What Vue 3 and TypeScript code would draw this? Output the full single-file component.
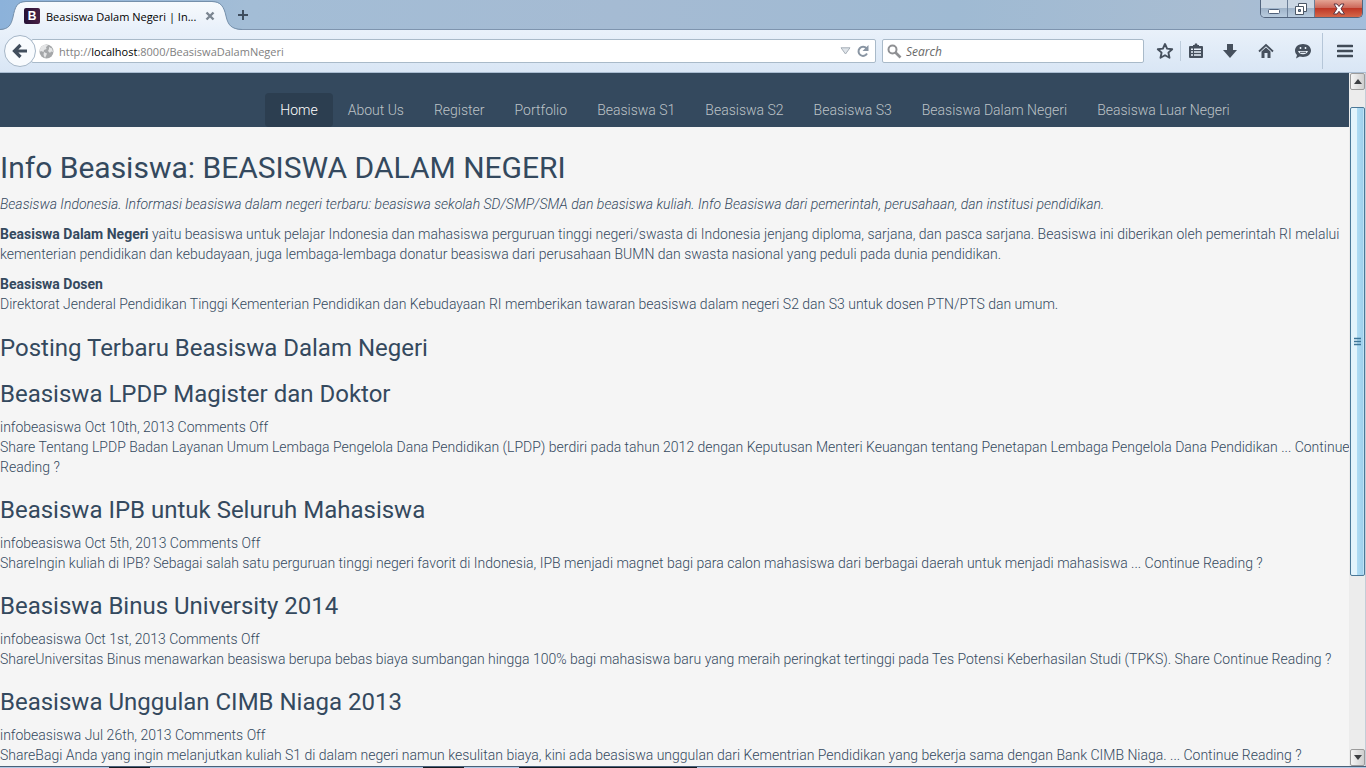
<script setup lang="ts">
import { ref } from 'vue'

interface Post {
  title: string
  meta: string
  text: string
}

const address = 'http://localhost:8000/BeasiswaDalamNegeri'
const query = ref('')

const links: string[] = [
  'Home',
  'About Us',
  'Register',
  'Portfolio',
  'Beasiswa S1',
  'Beasiswa S2',
  'Beasiswa S3',
  'Beasiswa Dalam Negeri',
  'Beasiswa Luar Negeri',
]

const posts: Post[] = [
  {
    title: 'Beasiswa LPDP Magister dan Doktor',
    meta: 'infobeasiswa Oct 10th, 2013 Comments Off',
    text: 'Share Tentang LPDP Badan Layanan Umum Lembaga Pengelola Dana Pendidikan (LPDP) berdiri pada tahun 2012 dengan Keputusan Menteri Keuangan tentang Penetapan Lembaga Pengelola Dana Pendidikan ... Continue Reading ?',
  },
  {
    title: 'Beasiswa IPB untuk Seluruh Mahasiswa',
    meta: 'infobeasiswa Oct 5th, 2013 Comments Off',
    text: 'ShareIngin kuliah di IPB? Sebagai salah satu perguruan tinggi negeri favorit di Indonesia, IPB menjadi magnet bagi para calon mahasiswa dari berbagai daerah untuk menjadi mahasiswa ... Continue Reading ?',
  },
  {
    title: 'Beasiswa Binus University 2014',
    meta: 'infobeasiswa Oct 1st, 2013 Comments Off',
    text: 'ShareUniversitas Binus menawarkan beasiswa berupa bebas biaya sumbangan hingga 100% bagi mahasiswa baru yang meraih peringkat tertinggi pada Tes Potensi Keberhasilan Studi (TPKS). Share Continue Reading ?',
  },
  {
    title: 'Beasiswa Unggulan CIMB Niaga 2013',
    meta: 'infobeasiswa Jul 26th, 2013 Comments Off',
    text: 'ShareBagi Anda yang ingin melanjutkan kuliah S1 di dalam negeri namun kesulitan biaya, kini ada beasiswa unggulan dari Kementrian Pendidikan yang bekerja sama dengan Bank CIMB Niaga. ... Continue Reading ?',
  },
]
</script>

<template>
  <div class="window">
    <header class="titlebar">
      <div class="tab">
        <svg class="tab-shape" viewBox="0 0 244 30" aria-hidden="true">
          <defs>
            <linearGradient id="tabFill" x1="0" y1="0" x2="0" y2="1">
              <stop offset="0" stop-color="#f7fafd" />
              <stop offset="1" stop-color="#e8f0fa" />
            </linearGradient>
          </defs>
          <path d="M0 30C9 29 11 25 13 17C15 7 17 2 26 2H212C221 2 224 7 226 16C228 25 231 29 242 30Z" fill="url(#tabFill)" />
          <path d="M0 29.500C9 29 11 25 13 17C15 7 17 1.500 26 1.500H212C221 1.500 224 7 226 16C228 25 231 29 242 29.500" fill="none" stroke="#7590ab" />
        </svg>
        <span class="favicon">B</span>
        <span class="tab-title">Beasiswa Dalam Negeri | In...</span>
        <button class="plain tab-close" aria-label="Close tab">
          <svg width="10" height="10" viewBox="0 0 10 10"><path d="M1.500 1.500L8.500 8.500M8.500 1.500L1.500 8.500" stroke="#7b8591" stroke-width="2.400" /></svg>
        </button>
      </div>
      <button class="plain new-tab" aria-label="New tab">
        <svg width="12" height="12" viewBox="0 0 12 12"><path d="M6 1V11M1 6H11" stroke="#3f4e5f" stroke-width="2" /></svg>
      </button>
      <div class="controls">
        <button class="control" aria-label="Minimize">
          <svg width="14" height="14" viewBox="0 0 14 14"><rect x="1.500" y="7.500" width="11" height="4" rx="1" fill="#fff" stroke="#50617a" /></svg>
        </button>
        <button class="control" aria-label="Restore">
          <svg width="14" height="14" viewBox="0 0 14 14" stroke="#4b5766"><path d="M4.500 1.500H12.500V9.500H4.500Z" fill="#fff" /><path d="M1.500 4.500H9.500V12.500H1.500Z" fill="#fff" /><path d="M4.500 7.500H6.500V9.500H4.500Z" fill="#7a94b4" /></svg>
        </button>
        <button class="control close" aria-label="Close">
          <svg width="14" height="12" viewBox="0 0 14 12"><path d="M2 1H5L7 3.500L9 1H12L9 5.800L12.500 11H9L7 8.300L5 11H1.500L5 5.800Z" fill="#fff" stroke="#5c3440" /></svg>
        </button>
      </div>
    </header>

    <div class="toolbar">
      <button class="back" aria-label="Back">
        <svg width="16" height="16" viewBox="0 0 16 16"><path d="M8.500 2L2.500 8L8.500 14M3 8H15" fill="none" stroke="#414e5d" stroke-width="3.200" /></svg>
      </button>
      <div class="field address">
        <svg width="15" height="15" viewBox="0 0 15 15" aria-hidden="true">
          <circle cx="7.500" cy="7.500" r="7" fill="#a5a7a9" />
          <path d="M3 2C5 .500 8 .300 9 1.500L7 3L7.500 5L5 6L4.500 8L2 7L.800 8C.600 5 1.500 3 3 2ZM10 3L13 4.500L14 8L12 7.500L11 9L9 7L10 5ZM5 8L8 9.500L7 12L6 14L4.500 11Z" fill="#e4e5e6" />
        </svg>
        <a class="url" href="#">http://<b>localhost</b>:8000/BeasiswaDalamNegeri</a>
        <button class="plain" aria-label="Show history" :title="address">
          <svg width="11" height="8" viewBox="0 0 11 8"><path d="M1 .800H10L5.500 7Z" fill="#dfe4e9" stroke="#a6aeb7" /></svg>
        </button>
        <button class="plain" aria-label="Reload">
          <svg width="14" height="14" viewBox="0 0 14 14"><path d="M10.500 4.500A4.500 4.500 0 1 0 11 9.500" fill="none" stroke="#8995a3" stroke-width="2" /><path d="M12.500 1V7H6.500Z" fill="#8995a3" /></svg>
        </button>
      </div>
      <label class="field search">
        <svg width="15" height="15" viewBox="0 0 15 15" aria-hidden="true"><circle cx="5.500" cy="5.500" r="4" fill="none" stroke="#8f9093" stroke-width="2" /><path d="M8.500 8.500L13.500 13.500" stroke="#8f9093" stroke-width="2.600" /></svg>
        <input v-model="query" type="text" placeholder="Search" aria-label="Search" />
      </label>
      <div class="tools">
        <button class="plain tool star" aria-label="Bookmark">
          <svg width="18" height="18" viewBox="0 0 18 18"><path d="M9 2L11.100 6.600L16.200 7.200L12.400 10.600L13.500 15.800L9 13.200L4.500 15.800L5.600 10.600L1.800 7.200L6.900 6.600Z" fill="none" stroke="#46505d" stroke-width="1.900" stroke-linejoin="round" /></svg>
        </button>
        <button class="plain tool list" aria-label="Bookmarks list">
          <svg width="16" height="16" viewBox="0 0 16 16"><path d="M5 3V2H6.500L7 .500H9L9.500 2H11V3H14Q15 3 15 4V14Q15 15 14 15H2Q1 15 1 14V4Q1 3 2 3Z" fill="#46505d" /><path d="M3 5.500H5V7H3ZM6 5.500H13V7H6ZM3 8.300H5V9.800H3ZM6 8.300H13V9.800H6ZM3 11.200H5V12.700H3ZM6 11.200H13V12.700H6Z" fill="#eaf2fb" /></svg>
        </button>
        <button class="plain tool" aria-label="Downloads">
          <svg width="16" height="16" viewBox="0 0 16 16"><path d="M5 1H11V7H15L8 15L1 7H5Z" fill="#46505d" /></svg>
        </button>
        <button class="plain tool" aria-label="Home page">
          <svg width="16" height="16" viewBox="0 0 16 16"><path d="M1 8.500L8 2L15 8.500" fill="none" stroke="#46505d" stroke-width="1.800" /><path d="M3.500 8.500L8 4.500L12.500 8.500V15H9.500V10H6.500V15H3.500Z" fill="#46505d" /></svg>
        </button>
        <button class="plain tool chat" aria-label="Chat">
          <svg width="18" height="16" viewBox="0 0 18 16"><path d="M9 1C13.500 1 17 3.800 17 7.500S13.500 14 9 14C7.800 14 6.700 13.800 5.700 13.500L2 15.500L3 12C1.700 10.800 1 9.200 1 7.500C1 3.800 4.500 1 9 1Z" fill="#46505d" /><path d="M6.500 4V6M11.500 4V6" stroke="#e9f1fa" stroke-width="1.500" /><path d="M4 8H14C13.500 10 11.800 11.200 9 11.200S4.500 10 4 8Z" fill="#e9f1fa" /><path d="M6 9.300H12" stroke="#46505d" stroke-width="1" /></svg>
        </button>
        <button class="plain tool menu" aria-label="Menu">
          <svg width="16" height="14" viewBox="0 0 16 14"><path d="M1 2H15M1 7H15M1 12H15" stroke="#414b57" stroke-width="2.600" stroke-linecap="round" /></svg>
        </button>
      </div>
    </div>

    <div class="viewport">
      <div class="page">
        <nav class="site-nav">
          <a v-for="(link, i) in links" :key="link" href="#" :class="{ active: i === 0 }">{{ link }}</a>
        </nav>
        <main>
          <h1>Info Beasiswa: BEASISWA DALAM NEGERI</h1>
          <p><em>Beasiswa Indonesia. Informasi beasiswa dalam negeri terbaru: beasiswa sekolah SD/SMP/SMA dan beasiswa kuliah. Info Beasiswa dari pemerintah, perusahaan, dan institusi pendidikan.</em></p>
          <p><strong>Beasiswa Dalam Negeri</strong> yaitu beasiswa untuk pelajar Indonesia dan mahasiswa perguruan tinggi negeri/swasta di Indonesia jenjang diploma, sarjana, dan pasca sarjana. Beasiswa ini diberikan oleh pemerintah RI melalui kementerian pendidikan dan kebudayaan, juga lembaga-lembaga donatur beasiswa dari perusahaan BUMN dan swasta nasional yang peduli pada dunia pendidikan.</p>
          <p><strong>Beasiswa Dosen</strong><br />Direktorat Jenderal Pendidikan Tinggi Kementerian Pendidikan dan Kebudayaan RI memberikan tawaran beasiswa dalam negeri S2 dan S3 untuk dosen PTN/PTS dan umum.</p>
          <h2 class="section-title">Posting Terbaru Beasiswa Dalam Negeri</h2>
          <article v-for="post in posts" :key="post.title">
            <h2>{{ post.title }}</h2>
            <div>{{ post.meta }}</div>
            <div>{{ post.text }}</div>
          </article>
        </main>
      </div>
      <div class="scrollbar">
        <button class="arrow" aria-label="Scroll up"><svg width="8" height="5" viewBox="0 0 8 5"><path d="M0 5L4 0L8 5Z" fill="#3d3f42" /></svg></button>
        <div class="track">
          <div class="thumb">
            <svg width="8" height="9" viewBox="0 0 8 9" aria-hidden="true"><path d="M0 1.500H7M0 4.500H7M0 7.500H7" stroke="#3e7699" stroke-width="1.600" /></svg>
          </div>
        </div>
        <button class="arrow" aria-label="Scroll down"><svg width="8" height="5" viewBox="0 0 8 5"><path d="M0 0L4 5L8 0Z" fill="#3d3f42" /></svg></button>
      </div>
    </div>
    <footer class="edge"></footer>
  </div>
</template>

<style>
body {
  margin: 0;
  overflow: hidden;
}
</style>

<style scoped>
* {
  box-sizing: border-box;
}
.window {
  height: 100vh;
  display: flex;
  flex-direction: column;
  font-family: "Noto Sans", "Open Sans", sans-serif;
  font-size: 12px;
}
.plain {
  padding: 0;
  border: 0;
  background: none;
  display: flex;
  align-items: center;
  justify-content: center;
}
.titlebar {
  display: flex;
  height: 30px;
  flex: none;
  border-bottom: 1px solid #7e94ae;
  background: linear-gradient(90deg, #8cb2da, #a3bdd6 18%, #a5bbd3 45%, #9fbad3 70%, #a9bdd2 90%, #a3bddb);
}
.tab {
  position: relative;
  display: flex;
  align-items: center;
  width: 230px;
  height: 30px;
  padding: 2px 15px 0 24px;
}
.tab-shape {
  position: absolute;
  left: 0;
  top: 0;
  width: 244px;
  height: 30px;
}
.favicon,
.tab-title,
.tab-close {
  position: relative;
}
.favicon {
  width: 16px;
  height: 16px;
  border-radius: 2px;
  background: linear-gradient(90deg, #251136, #482044);
  color: #fff;
  font: bold 12px/16px "Liberation Sans", sans-serif;
  text-align: center;
}
.tab-title {
  flex: 1;
  margin-left: 6px;
  font-family: "Open Sans", sans-serif;
  font-size: 11px;
  white-space: nowrap;
  color: #000;
}
.new-tab {
  width: 26px;
}
.controls {
  display: flex;
  height: 18px;
  margin-left: auto;
  margin-right: 3px;
  border: 1px solid #52647d;
  border-top: 0;
  border-radius: 0 0 5px 5px;
  overflow: hidden;
}
.control {
  width: 27px;
  padding: 0;
  border: 0;
  border-right: 1px solid #6b7e97;
  background: linear-gradient(#cbd7e4 45%, #a0b4ca 50%, #b8cbde);
  display: flex;
  align-items: center;
  justify-content: center;
}
.control.close {
  width: 47px;
  border-right: 0;
  background: linear-gradient(#e4a494, #cd695b 45%, #bf3827 50%, #d5674a);
}
.toolbar {
  display: flex;
  align-items: center;
  flex: none;
  height: 43px;
  padding-left: 4px;
  border-bottom: 1px solid #aabdd2;
  background: linear-gradient(#e9f1fa, #d9e6f5);
}
.back {
  width: 32px;
  height: 32px;
  padding: 0;
  border: 1px solid #a5b6c7;
  border-radius: 50%;
  background: #f8fbfe;
  display: flex;
  align-items: center;
  justify-content: center;
  z-index: 1;
}
.field {
  display: flex;
  align-items: center;
  height: 24px;
  border: 1px solid #a9bac9;
  border-radius: 2px;
  background: #fff;
}
.address {
  flex: 1;
  gap: 5px;
  margin-left: -5px;
  padding: 0 5px 0 7px;
}
.url {
  flex: 1;
  font-family: "Open Sans", sans-serif;
  font-size: 11px;
  color: #818181;
  text-decoration: none;
}
.url b {
  font-weight: 400;
  color: #000;
}
.search {
  width: 262px;
  margin-left: 6px;
  padding-left: 4px;
  gap: 4px;
}
.search input {
  flex: 1;
  min-width: 0;
  padding: 0;
  border: 0;
  outline: 0;
  background: none;
  font: italic 12px "Open Sans", sans-serif;
}
.search input::placeholder {
  color: #696969;
}
.tools {
  display: flex;
  align-items: center;
  height: 100%;
  padding-left: 6px;
}
.tool {
  width: 36px;
  height: 100%;
}
.star {
  width: 30px;
}
.list {
  width: 30px;
  height: 20px;
  margin-right: 2px;
  border-left: 1px solid #bdccdb;
}
.chat {
  width: 38px;
}
.menu {
  width: 44px;
  height: 36px;
  border-left: 1px solid #b5c6d8;
}
.viewport {
  display: flex;
  flex: 1;
  min-height: 0;
}
.page {
  flex: 1;
  min-width: 0;
  overflow: hidden;
  background: #f5f5f5;
  color: #34495e;
  font: 300 14px/20px Roboto, sans-serif;
}
.site-nav {
  display: flex;
  justify-content: center;
  padding: 20px 0 0 161px;
  background: #34495e;
}
.site-nav a {
  padding: 7px 15px;
  border-radius: 4px;
  color: #bdc3c7;
  white-space: nowrap;
  text-decoration: none;
}
.site-nav .active {
  background: #2c3e50;
  color: #fff;
}
main {
  margin-right: -4px;
}
h1,
h2 {
  margin: 20px 0 10px;
  font-weight: 400;
}
h1 {
  margin-top: 24px;
  font-size: 30px;
  line-height: 33px;
}
h2 {
  font-size: 24px;
  line-height: 26px;
}
.section-title {
  margin-top: 21px;
}
p {
  margin: 0 0 10px;
}
strong {
  font-weight: 700;
}
.scrollbar {
  display: flex;
  flex-direction: column;
  width: 17px;
  border-right: 1px solid #c4cdd7;
  background: #ececec;
  z-index: 1;
}
.arrow {
  width: 15px;
  height: 17px;
  margin-left: 1px;
  padding: 0;
  border: 1px solid #9b9b9b;
  border-radius: 2px;
  background: linear-gradient(90deg, #f5f5f5, #cfcfcf);
  display: flex;
  align-items: center;
  justify-content: center;
}
.track {
  flex: 1;
  padding: 17px 0 0 1px;
}
.thumb {
  width: 15px;
  height: 73%;
  border: 1px solid #4a7898;
  border-radius: 2px;
  background: linear-gradient(90deg, #e3f4fc 45%, #aedbf3 50%, #9fd0ec 90%, #d5effb);
  display: flex;
  align-items: center;
  justify-content: center;
}
.edge {
  flex: none;
  height: 2px;
  border-top: 1px solid #4a6078;
  background: linear-gradient(90deg, #b0c8e4 8%, #141a22 8% 11%, #b0c8e4 11% 31%, #141a22 31% 34%, #b0c8e4 34% 38%, #141a22 38% 51%, #b0c8e4 51%);
}
</style>
